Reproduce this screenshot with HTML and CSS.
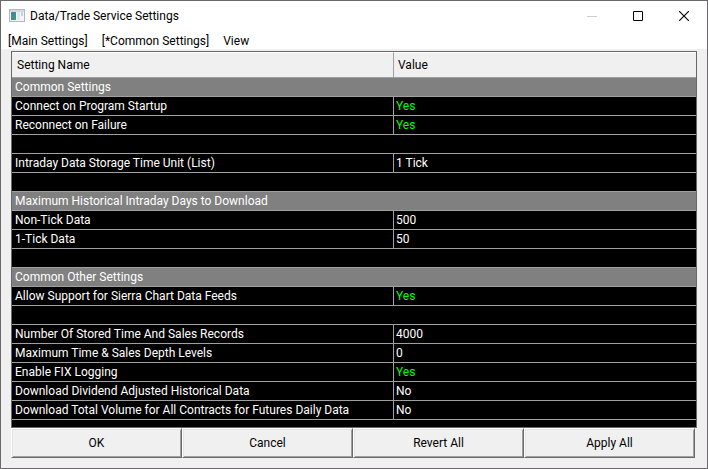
FILE: index.html
```html
<!DOCTYPE html>
<html lang="en">
    <head>
        <meta charset="utf-8">
        <title>Data/Trade Service Settings</title>
        <link rel="stylesheet" href="styles.css">
    </head>

    <body>
        <div class="window">
            <header class="titlebar">
                <svg class="app-icon" width="16" height="14" viewBox="0 0 16 14">
                    <defs>
                        <linearGradient id="pane" x1="0" y1="0" x2="1" y2="1">
                            <stop offset="0" stop-color="#4a7fb0"/>
                            <stop offset="1" stop-color="#3f9a74"/>
                        </linearGradient>
                    </defs>
                    <rect x="0.5" y="0.5" width="15" height="12" fill="#f4f5f7" stroke="#b4b8be"/>
                    <rect x="1" y="1" width="14" height="2" fill="#d5dae0"/>
                    <rect x="2" y="3" width="5" height="8" fill="url(#pane)"/>
                    <rect x="8" y="3" width="3" height="8" fill="#e6e8ea"/>
                    <rect x="12" y="3" width="2" height="4" fill="#c3d6cf"/>
                </svg>
                <h1>Data/Trade Service Settings</h1>
                <div class="controls">
                    <button type="button" aria-label="Minimize" disabled>
                        <svg width="10" height="10" viewBox="0 0 10 10"><path d="M0 5.5h10" stroke="#ccc"/></svg>
                    </button>
                    <button type="button" aria-label="Maximize">
                        <svg width="10" height="10" viewBox="0 0 10 10"><path d="M.5 .5h9v9h-9z" fill="none" stroke="#000"/></svg>
                    </button>
                    <button type="button" aria-label="Close">
                        <svg width="10" height="10" viewBox="0 0 10 10"><path d="M0 0l10 10M10 0L0 10" stroke="#000" stroke-width="1.1"/></svg>
                    </button>
                </div>
            </header>

            <nav class="menubar">
                <button type="button">[Main Settings]</button>
                <button type="button">[*Common Settings]</button>
                <button type="button">View</button>
            </nav>

            <main class="client">
                <div class="list">
                    <table>
                        <colgroup>
                            <col class="col-name">
                            <col>
                        </colgroup>
                        <thead>
                            <tr><th>Setting Name</th><th>Value</th></tr>
                        </thead>
                        <tbody>
                            <tr class="section"><td colspan="2">Common Settings</td></tr>
                            <tr><td>Connect on Program Startup</td><td class="yes">Yes</td></tr>
                            <tr><td>Reconnect on Failure</td><td class="yes">Yes</td></tr>
                            <tr><td colspan="2"></td></tr>
                            <tr><td>Intraday Data Storage Time Unit (List)</td><td>1 Tick</td></tr>
                            <tr><td colspan="2"></td></tr>
                            <tr class="section"><td colspan="2">Maximum Historical Intraday Days to Download</td></tr>
                            <tr><td>Non-Tick Data</td><td>500</td></tr>
                            <tr><td>1-Tick Data</td><td>50</td></tr>
                            <tr><td colspan="2"></td></tr>
                            <tr class="section"><td colspan="2">Common Other Settings</td></tr>
                            <tr><td>Allow Support for Sierra Chart Data Feeds</td><td class="yes">Yes</td></tr>
                            <tr><td colspan="2"></td></tr>
                            <tr><td>Number Of Stored Time And Sales Records</td><td>4000</td></tr>
                            <tr><td>Maximum Time &amp; Sales Depth Levels</td><td>0</td></tr>
                            <tr><td>Enable FIX Logging</td><td class="yes">Yes</td></tr>
                            <tr><td>Download Dividend Adjusted Historical Data</td><td>No</td></tr>
                            <tr><td>Download Total Volume for All Contracts for Futures Daily Data</td><td>No</td></tr>
                        </tbody>
                    </table>
                </div><!--list-->

                <div class="actions">
                    <button type="button">OK</button>
                    <button type="button">Cancel</button>
                    <button type="button">Revert All</button>
                    <button type="button">Apply All</button>
                </div>
            </main>
        </div><!--window-->
    </body>
</html>
```

FILE: styles.css
```css
*{margin:0;padding:0;box-sizing:border-box;}

body, button{
    font-family: Roboto, "Noto Sans", sans-serif;
    font-size: 12px;
    line-height: 18px;
    color: #000;
}

button{
    border: 0;
    background: transparent;
}

.window{
    display: flex;
    flex-direction: column;
    height: 100vh;
    border: 1px solid #6b696b;
    background-color: #f0f0f0;
}

/* title bar */
.titlebar{
    display: flex;
    align-items: center;
    height: 30px;
    padding-left: 8px;
    background-color: #fff;
}

.titlebar h1{
    flex: 1;
    margin-left: 5px;
    font-size: 12px;
    font-weight: normal;
}

.controls{
    display: flex;
}

.controls button{
    display: flex;
    align-items: center;
    justify-content: center;
    width: 46px;
    height: 28px;
}

/* menu */
.menubar{
    display: flex;
    gap: 14px;
    height: 18px;
    padding: 1px 7px 0;
    background-color: #fff;
}

/* settings list */
.client{
    flex: 1;
    display: flex;
    flex-direction: column;
    min-height: 0;
    padding: 2px 10px 10px;
}

.list{
    flex: 1;
    min-height: 0;
    overflow: hidden;
    border: 1px solid #696969;
    background-color: #000;
}

table{
    width: 100%;
    table-layout: fixed;
    border-collapse: separate;
    border-spacing: 0;
}

.col-name{
    width: 381px;
}

th{
    height: 26px;
    padding-left: 4px;
    border-top: 1px solid #fff;
    border-bottom: 1px solid #a0a0a0;
    background-color: #f0f0f0;
    font-weight: normal;
    text-align: left;
}

th:first-child{
    padding-left: 5px;
}

td{
    height: 19px;
    padding-left: 2px;
    border-bottom: 1px solid #a0a0a0;
    color: #fff;
    white-space: nowrap;
}

td:first-child{
    padding-left: 3px;
}

th + th, td + td{
    border-left: 1px solid #a0a0a0;
}

.section td{
    background-color: #808080;
}

.yes{
    color: #00ff00;
}

/* bottom buttons */
.actions{
    display: grid;
    grid-template-columns: repeat(4, 1fr);
    margin-right: 2px;
}

.actions button{
    height: 30px;
    border: 1px solid;
    border-color: #fff #696969 #696969 #fff;
    background-color: #f0f0f0;
    box-shadow: inset 1px 1px #e3e3e3, inset -1px -1px #a0a0a0;
}
```
